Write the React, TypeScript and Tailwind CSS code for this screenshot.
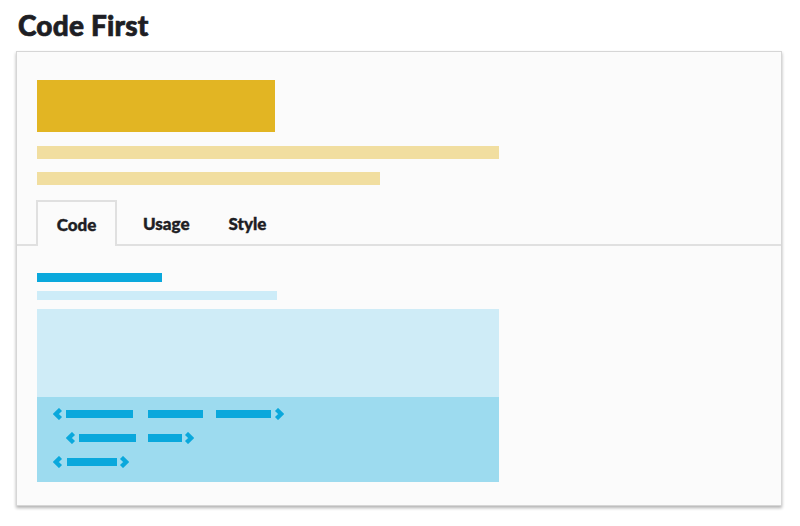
const BLUE = "#0aa8dc";

function Chevron({ dir }: { dir: "left" | "right" }) {
    return (
        <svg width="10" height="12" viewBox="0 0 10 12" className="shrink-0">
            <polyline
                points={dir === "left" ? "7.5,1.5 2.8,6 7.5,10.5" : "2.5,1.5 7.2,6 2.5,10.5"}
                fill="none"
                stroke={BLUE}
                strokeWidth={4.4}
                strokeLinejoin="miter"
            />
        </svg>
    );
}

function Bar({ w }: { w: string }) {
    return <div className={`h-[8px] bg-[#0aa8dc] ${w}`} />;
}

export default function App() {
    return (
        <div
            className="w-[800px] h-[526px] bg-white pl-[16px] pr-[18px] pt-[7px]"
            style={{ fontFamily: "Lato, 'Open Sans', sans-serif" }}
        >
            <h1 className="text-[28px] leading-[36px] font-black text-[#1e1e24] pl-[2px] tracking-[0.2px] [-webkit-text-stroke:0.7px_#1e1e24]">Code First</h1>

            {/* card */}
            <div className="mt-[8px] h-[455px] border border-[#d6d6d6] bg-[#fbfbfb] shadow-[0_2px_3px_rgba(0,0,0,0.3)]">
                <div className="px-[20px] pt-[28px]">
                    <div className="w-[238px] h-[52px] bg-[#e2b523]" />
                    <div className="mt-[14px] w-[462px] h-[13px] bg-[#f1dea0]" />
                    <div className="mt-[13px] w-[343px] h-[13px] bg-[#f1dea0]" />
                </div>

                {/* tabs */}
                <div className="mt-[17px] flex items-end h-[44px] border-b-2 border-[#e0e0e0] pl-[19px] text-[17px] font-black text-[#1e1e24] [-webkit-text-stroke:0.4px_#1e1e24]">
                    <div className="-mb-[2px] w-[81px] h-[46px] border-2 border-b-0 border-[#e0e0e0] bg-[#fbfbfb] flex items-center justify-center pt-[2px]">
                        Code
                    </div>
                    <div className="h-[44px] flex items-center ml-[26px] pt-[3px]">Usage</div>
                    <div className="h-[44px] flex items-center ml-[39px] pt-[3px]">Style</div>
                </div>

                {/* code panel */}
                <div className="px-[20px] pt-[27px]">
                    <div className="w-[125px] h-[9px] bg-[#0aa8dc]" />
                    <div className="mt-[9px] w-[240px] h-[9px] bg-[#cdecf8]" />
                    <div className="mt-[9px] w-[462px] h-[88px] bg-[#cfecf7]" />
                    <div className="w-[462px] h-[85px] bg-[#9ddbef] pt-[11px] flex flex-col gap-[12px]">
                        <div className="flex items-center h-[12px] ml-[16px]">
                            <Chevron dir="left" />
                            <div className="ml-[3px]"><Bar w="w-[67px]" /></div>
                            <div className="ml-[15px]"><Bar w="w-[55px]" /></div>
                            <div className="ml-[13px]"><Bar w="w-[55px]" /></div>
                            <div className="ml-[3px]"><Chevron dir="right" /></div>
                        </div>
                        <div className="flex items-center h-[12px] ml-[29px]">
                            <Chevron dir="left" />
                            <div className="ml-[3px]"><Bar w="w-[57px]" /></div>
                            <div className="ml-[12px]"><Bar w="w-[34px]" /></div>
                            <div className="ml-[2px]"><Chevron dir="right" /></div>
                        </div>
                        <div className="flex items-center h-[12px] ml-[16px]">
                            <Chevron dir="left" />
                            <div className="ml-[4px]"><Bar w="w-[50px]" /></div>
                            <div className="ml-[2px]"><Chevron dir="right" /></div>
                        </div>
                    </div>
                </div>
            </div>
        </div>
    );
}
